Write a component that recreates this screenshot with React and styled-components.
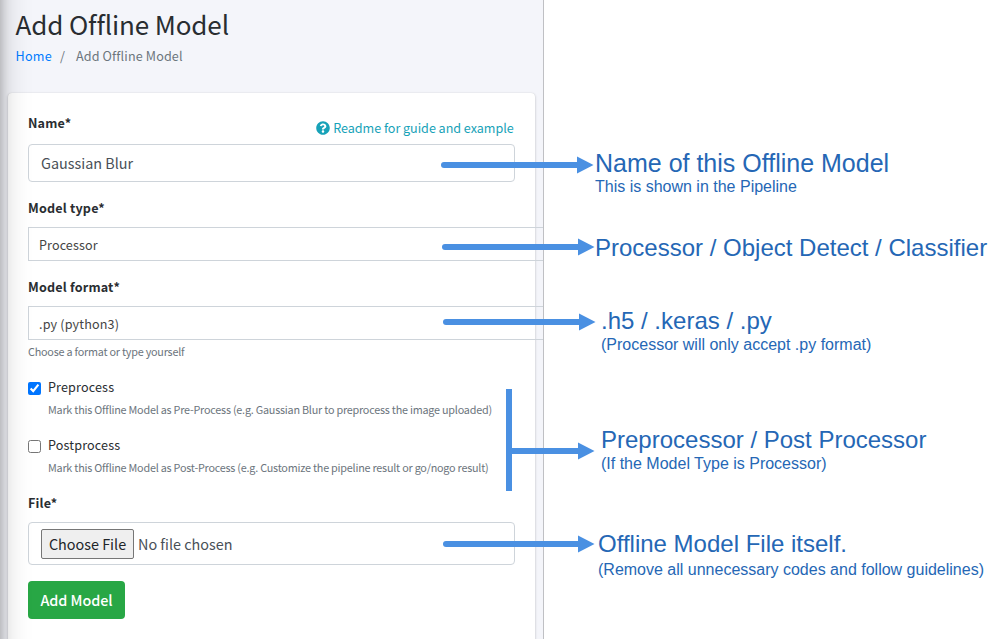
import React from "react";
import styled, { createGlobalStyle } from "styled-components";

const GlobalStyle = createGlobalStyle`
  *, *::before, *::after { box-sizing: border-box; }
  body { margin: 0; background: #fff; overflow: hidden; }
`;

const Page = styled.div`
  position: relative;
  display: grid;
  grid-template-columns: 544px 1fr;
  width: 993px;
  height: 639px;
  overflow: hidden;
  background: #fff;
`;

const Screen = styled.main`
  position: relative;
  height: 639px;
  overflow: hidden;
  padding: 6px 0 0 8px;
  background: #f4f5fa;
  border-right: 1px solid #bfc0c4;
  color: #292d31;
  font-family: "Noto Sans CJK SC", "Noto Sans", sans-serif;
`;

const SidebarShadow = styled.div`
  position: absolute;
  top: -100px;
  bottom: -100px;
  left: -250px;
  width: 250px;
  pointer-events: none;
  box-shadow: 0 14px 28px rgba(0, 0, 0, 0.25), 0 10px 10px rgba(0, 0, 0, 0.22);
`;

const Text = styled.span`
  display: block;
  white-space: nowrap;
  font-size: ${(p) => p.$size || 12.6}px;
  line-height: 21px;
  letter-spacing: ${(p) => p.$track || 0}px;
  color: ${(p) => p.$color || "inherit"};
`;

const HelpText = styled(Text)`
  font-size: 10.8px;
  line-height: ${(p) => p.$line || 24}px;
  letter-spacing: -0.22px;
  color: #6c757d;
`;

const Title = styled.h1`
  margin: 0;
  padding-left: 7.5px;
  font-size: 26px;
  font-weight: 400;
  line-height: 36px;
  letter-spacing: -0.12px;
  white-space: nowrap;
`;

const Breadcrumb = styled.nav`
  display: flex;
  height: 21px;
  margin-top: 3px;
  padding-left: 7.5px;
`;

const Separator = styled(Text)`
  width: 24px;
  padding-left: 8px;
`;

const Card = styled.form`
  width: 527px;
  height: 600px;
  margin: 27px 0 0;
  padding: 19px 0 0 20px;
  background: #fff;
  border-radius: 4px;
  box-shadow: 0 0 1px rgba(0, 0, 0, 0.125), 0 1px 3px rgba(0, 0, 0, 0.2);
`;

const LabelRow = styled.div`
  display: flex;
  justify-content: space-between;
  width: 487px;
  height: ${(p) => p.$height || 30}px;
`;

const Label = styled.label`
  font-size: 12.6px;
  font-weight: 700;
  line-height: 21px;
  letter-spacing: 0.18px;
  white-space: nowrap;
`;

const ReadmeLink = styled.a`
  display: flex;
  align-items: center;
  gap: 3px;
  height: 21px;
  margin: 5px 1.3px 0 0;
  color: #17a2b8;
`;

const Field = styled.div`
  display: flex;
  align-items: center;
  width: 487px;
  height: ${(p) => p.$height || 38}px;
  padding: 0 0 ${(p) => p.$lift || 0}px 12px;
  border: 1px solid #ced4da;
  border-radius: 4px;
  background: transparent;
  color: #495057;
`;

const Select = styled.div`
  display: flex;
  align-items: center;
  width: 540px;
  height: 34px;
  padding-left: 10px;
  border: 1px solid #ced4da;
  color: #444;
`;

const Group = styled.div`
  margin-bottom: ${(p) => p.$gap}px;
`;

const CheckRow = styled.div`
  display: grid;
  grid-template-columns: 20px 1fr;
  height: 58px;
`;

const Checkbox = styled.input`
  width: 13px;
  height: 13px;
  margin: 6px 0 0;
`;

const ChooseButton = styled.button`
  display: flex;
  align-items: center;
  justify-content: center;
  width: 93px;
  height: 30px;
  margin-right: 4px;
  padding: 0;
  border: 1px solid #767676;
  border-radius: 2px;
  background: #efefef;
  color: #212529;
  font-family: inherit;
`;

const SubmitButton = styled.button`
  display: flex;
  align-items: center;
  justify-content: center;
  width: 97px;
  height: 38px;
  padding: 0 0 2px;
  border: 0;
  border-radius: 4px;
  background: #28a745;
  color: #fff;
  font-family: inherit;
  font-weight: 500;
`;

const Notes = styled.aside`
  padding-top: 150px;
  font-family: "Liberation Sans", Arial, sans-serif;
  color: #2567b5;
`;

const Note = styled.section`
  height: ${(p) => p.$height}px;
  padding-left: ${(p) => p.$indent}px;
  white-space: nowrap;
`;

const NoteTitle = styled.h2`
  margin: 0;
  font-size: ${(p) => p.$size || 24}px;
  font-weight: 400;
  line-height: ${(p) => p.$line || 28}px;
`;

const NoteText = styled.p`
  margin: ${(p) => p.$top || 0}px 0 0;
  font-size: 16px;
  line-height: 18px;
`;

const Arrows = styled.svg`
  position: absolute;
  inset: 0;
  pointer-events: none;
`;

const arrows = [
  { x: 441, y: 165, head: 577 },
  { x: 442, y: 247, head: 578 },
  { x: 443, y: 322, head: 579 },
  { x: 443, y: 544, head: 578 },
];

const notes = [
  { title: "Name of this Offline Model", text: "This is shown in the Pipeline", indent: 51, height: 84, size: 25, line: 26, top: 2 },
  { title: "Processor / Object Detect / Classifier", indent: 51, height: 73 },
  { title: ".h5 / .keras / .py", text: "(Processor will only accept .py format)", indent: 57, height: 119, top: 1 },
  { title: "Preprocessor / Post Processor", text: "(If the Model Type is Processor)", indent: 57, height: 104, top: 1 },
  { title: "Offline Model File itself.", text: "(Remove all unnecessary codes and follow guidelines)", indent: 54, height: 60, top: 3 },
];

function HelpIcon() {
  return (
    <svg width="14" height="14" viewBox="0 0 512 512" fill="currentColor">
      <path d="M504 256c0 136.997-111.043 248-248 248S8 392.997 8 256C8 119.083 119.043 8 256 8s248 111.083 248 248zM262.655 90c-54.497 0-89.255 22.957-116.549 63.758-3.536 5.286-2.353 12.415 2.715 16.258l34.699 26.31c5.205 3.947 12.621 3.008 16.665-2.122 17.864-22.658 30.113-35.797 57.303-35.797 20.429 0 45.698 13.148 45.698 32.958 0 14.976-12.363 22.667-32.534 33.976C247.128 238.528 216 254.941 216 296v4c0 6.627 5.373 12 12 12h56c6.627 0 12-5.373 12-12v-1.333c0-28.462 83.186-29.647 83.186-106.667 0-58.002-60.165-102-116.531-102zM256 338c-25.365 0-46 20.635-46 46 0 25.364 20.635 46 46 46s46-20.636 46-46c0-25.365-20.635-46-46-46z" />
    </svg>
  );
}

export default function App() {
  return (
    <>
      <GlobalStyle />
      <Page>
        <Screen>
          <Title>Add Offline Model</Title>
          <Breadcrumb>
            <Text $color="#007bff" $track={0.25}>Home</Text>
            <Separator $color="#6c757d">/</Separator>
            <Text $color="#6c757d" $track={0.14}>Add Offline Model</Text>
          </Breadcrumb>
          <Card>
            <Group $gap={15}>
              <LabelRow $height={32}>
                <Label>Name*</Label>
                <ReadmeLink>
                  <HelpIcon />
                  <Text $track={-0.04}>Readme for guide and example</Text>
                </ReadmeLink>
              </LabelRow>
              <Field $lift={2}><Text $size={14.4}>Gaussian Blur</Text></Field>
            </Group>
            <Group $gap={15}>
              <LabelRow><Label>Model type*</Label></LabelRow>
              <Select><Text $track={0.1}>Processor</Text></Select>
            </Group>
            <Group $gap={14}>
              <LabelRow><Label>Model format*</Label></LabelRow>
              <Select><Text $track={0.15}>.py (python3)</Text></Select>
              <HelpText $line={22}>Choose a format or type yourself</HelpText>
            </Group>
            <CheckRow>
              <Checkbox type="checkbox" defaultChecked />
              <div>
                <Text $track={0.14}>Preprocess</Text>
                <HelpText>Mark this Offline Model as Pre-Process (e.g. Gaussian Blur to preprocess the image uploaded)</HelpText>
              </div>
            </CheckRow>
            <CheckRow>
              <Checkbox type="checkbox" />
              <div>
                <Text $track={0.14}>Postprocess</Text>
                <HelpText>Mark this Offline Model as Post-Process (e.g. Customize the pipeline result or go/nogo result)</HelpText>
              </div>
            </CheckRow>
            <Group $gap={16}>
              <LabelRow><Label>File*</Label></LabelRow>
              <Field $height={43}>
                <ChooseButton type="button"><Text $size={14.4}>Choose File</Text></ChooseButton>
                <Text $size={14.4}>No file chosen</Text>
              </Field>
            </Group>
            <SubmitButton type="button"><Text $size={14.4} $track={-0.05}>Add Model</Text></SubmitButton>
          </Card>
          <SidebarShadow />
        </Screen>
        <Notes>
          {notes.map((n) => (
            <Note key={n.title} $indent={n.indent} $height={n.height}>
              <NoteTitle $size={n.size} $line={n.line}>{n.title}</NoteTitle>
              {n.text && <NoteText $top={n.top}>{n.text}</NoteText>}
            </Note>
          ))}
        </Notes>
        <Arrows width="993" height="639" fill="#4a90e2" stroke="none">
          {arrows.map((a) => (
            <g key={a.y}>
              <rect x={a.x} y={a.y - 3} width="12" height="6" rx="3" />
              <rect x={a.x + 4} y={a.y - 3} width={a.head - a.x - 3} height="6" />
              <path d={`M${a.head} ${a.y - 8.5}l16.5 8.5l-16.5 8.5z`} />
            </g>
          ))}
          <rect x="506" y="389" width="6" height="102" />
          <rect x="511" y="448" width="68" height="6" />
          <path d="M578 442.500l16.500 8.500l-16.500 8.500z" />
        </Arrows>
      </Page>
    </>
  );
}
